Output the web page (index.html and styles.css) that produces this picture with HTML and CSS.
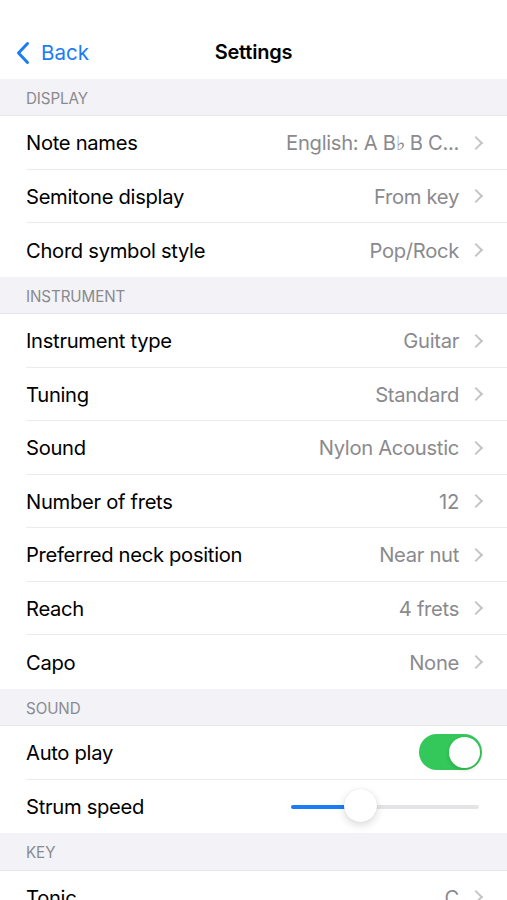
FILE: index.html
```html
<!DOCTYPE html>
<html>
<head>
<meta charset="utf-8">
<link rel="stylesheet" href="styles.css">
</head>
<body>
<div class="screen">
  <header class="nav">
    <div class="back">
      <svg class="back-chev" width="14" height="24" viewBox="0 0 14 24"><path d="M11.5 2.5 L2.5 12 L11.5 21.5" fill="none" stroke="#1a7cf6" stroke-width="3" stroke-linecap="round" stroke-linejoin="round"/></svg>
      <span>Back</span>
    </div>
    <div class="title">Settings</div>
  </header>

  <div class="section">DISPLAY</div>
  <div class="group">
    <div class="row"><span class="label">Note names</span><span class="value">English: A B♭ B C...</span><span class="chev"></span></div>
    <div class="row"><span class="label">Semitone display</span><span class="value">From key</span><span class="chev"></span></div>
    <div class="row last"><span class="label">Chord symbol style</span><span class="value">Pop/Rock</span><span class="chev"></span></div>
  </div>

  <div class="section">INSTRUMENT</div>
  <div class="group">
    <div class="row"><span class="label">Instrument type</span><span class="value">Guitar</span><span class="chev"></span></div>
    <div class="row"><span class="label">Tuning</span><span class="value">Standard</span><span class="chev"></span></div>
    <div class="row"><span class="label">Sound</span><span class="value">Nylon Acoustic</span><span class="chev"></span></div>
    <div class="row"><span class="label">Number of frets</span><span class="value">12</span><span class="chev"></span></div>
    <div class="row"><span class="label">Preferred neck position</span><span class="value">Near nut</span><span class="chev"></span></div>
    <div class="row"><span class="label">Reach</span><span class="value">4 frets</span><span class="chev"></span></div>
    <div class="row last"><span class="label">Capo</span><span class="value">None</span><span class="chev"></span></div>
  </div>

  <div class="section">SOUND</div>
  <div class="group">
    <div class="row"><span class="label">Auto play</span><span class="toggle"><span class="knob"></span></span></div>
    <div class="row last"><span class="label">Strum speed</span>
      <span class="slider"><span class="fill"></span><span class="thumb"></span></span>
    </div>
  </div>

  <div class="section">KEY</div>
  <div class="group">
    <div class="row"><span class="label">Tonic</span><span class="value">C</span><span class="chev"></span></div>
  </div>
</div>
</body>
</html>
```

FILE: styles.css
```css
* { box-sizing: border-box; }
html, body { margin: 0; padding: 0; background: #fff; }
body {
  font-family: Inter, "Noto Sans", "Liberation Sans", sans-serif;
  color: #000;
  -webkit-font-smoothing: antialiased;
}
.screen { width: 507px; height: 900px; overflow: hidden; }

.nav {
  height: 78.5px;
  position: relative;
  display: flex;
  align-items: center;
  justify-content: center;
  padding-top: 26px;
  background: #fff;
}
.back {
  position: absolute;
  left: 16px;
  top: 40px;
  display: flex;
  align-items: center;
  gap: 11px;
  color: #1a7cf6;
  font-size: 20.5px;
}
.back-chev { display: block; }
.title {
  font-size: 20px;
  font-weight: 600;
  letter-spacing: -0.2px;
}

.section {
  height: 37.5px;
  background: #f2f2f7;
  color: #8a8a8e;
  font-size: 15.2px;
  padding-left: 26px;
  display: flex;
  align-items: center;
  padding-top: 3px;
  letter-spacing: -0.1px;
  border-bottom: 1px solid #e6e6ea;
}

.group { background: #fff; }
.row {
  height: 53.5px;
  display: flex;
  align-items: center;
  margin-left: 26px;
  padding-right: 25px;
  padding-top: 1px;
  border-bottom: 1px solid #ececef;
  font-size: 20.2px;
  letter-spacing: -0.3px;
}
.row.last { border-bottom: none; }
.label { flex: 1; }
.value { color: #8a8a8e; }
.chev {
  width: 9px;
  height: 14px;
  margin-left: 14px;
  position: relative;
}
.chev::before {
  content: "";
  position: absolute;
  left: -2px;
  top: 2px;
  width: 8px;
  height: 8px;
  border-right: 2px solid #c5c5c8;
  border-top: 2px solid #c5c5c8;
  transform: rotate(45deg);
}

.toggle {
  width: 63px;
  height: 36px;
  border-radius: 18px;
  background: #34c759;
  position: relative;
  margin-top: -1px;
}
.knob {
  position: absolute;
  right: 2.5px;
  top: 2.5px;
  width: 31px;
  height: 31px;
  border-radius: 50%;
  background: #fff;
  box-shadow: 0 2px 4px rgba(0,0,0,0.15);
}

.slider {
  width: 188px;
  height: 4px;
  background: #e4e4e6;
  border-radius: 2px;
  position: relative;
  margin-right: 3px;
}
.fill {
  position: absolute;
  left: 0; top: 0;
  width: 69px;
  height: 4px;
  background: #1a7cf6;
  border-radius: 2px;
}
.thumb {
  position: absolute;
  left: 53px;
  top: -16px;
  width: 33px;
  height: 33px;
  border-radius: 50%;
  background: #fff;
  box-shadow: 0 3px 8px rgba(0,0,0,0.15), 0 0 1px rgba(0,0,0,0.15);
}
```
